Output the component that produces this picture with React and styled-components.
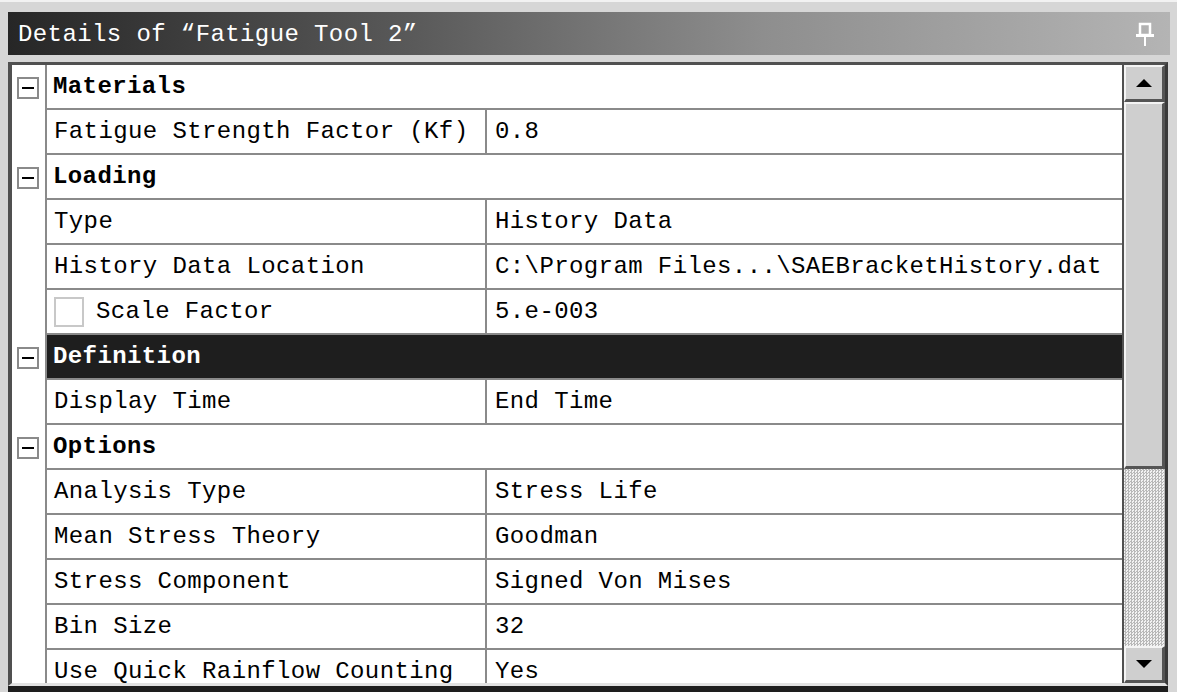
import React from "react";
import styled, { createGlobalStyle } from "styled-components";

const GlobalStyle = createGlobalStyle`
  html, body {
    margin: 0;
    padding: 0;
    background: #d6d6d6;
    overflow: hidden;
  }
`;

const rows = [
  { type: "group", label: "Materials" },
  { label: "Fatigue Strength Factor (Kf)", value: "0.8" },
  { type: "group", label: "Loading" },
  { label: "Type", value: "History Data" },
  { label: "History Data Location", value: "C:\\Program Files...\\SAEBracketHistory.dat" },
  { label: "Scale Factor", value: "5.e-003", check: true },
  { type: "group", label: "Definition", selected: true },
  { label: "Display Time", value: "End Time" },
  { type: "group", label: "Options" },
  { label: "Analysis Type", value: "Stress Life" },
  { label: "Mean Stress Theory", value: "Goodman" },
  { label: "Stress Component", value: "Signed Von Mises" },
  { label: "Bin Size", value: "32" },
  { label: "Use Quick Rainflow Counting", value: "Yes" },
];

export default function App() {
  return (
    <Window>
      <GlobalStyle />
      <TitleBar>
        <Title>Details of “Fatigue Tool 2”</Title>
        <PinIcon />
      </TitleBar>
      <Panel>
        <Table>
          {rows.map((row, i) =>
            row.type === "group" ? (
              <Row key={i}>
                <Gutter>
                  <Toggle />
                </Gutter>
                <GroupCell $selected={row.selected}>{row.label}</GroupCell>
              </Row>
            ) : (
              <Row key={i}>
                <Gutter />
                <LabelCell>
                  {row.check && <CheckBox />}
                  {row.label}
                </LabelCell>
                <ValueCell>{row.value}</ValueCell>
              </Row>
            )
          )}
        </Table>
        <ScrollBar>
          <ScrollButton>
            <Arrow />
          </ScrollButton>
          <Thumb />
          <Track />
          <ScrollButton>
            <Arrow $down />
          </ScrollButton>
        </ScrollBar>
      </Panel>
    </Window>
  );
}

function PinIcon() {
  return (
    <svg width="22" height="26" viewBox="0 0 22 26">
      <path d="M6 2 H16 V13 H6 Z" fill="none" stroke="#fff" strokeWidth="2.5" />
      <rect x="2" y="12" width="18" height="3" fill="#fff" />
      <rect x="10" y="15" width="2" height="9" fill="#fff" />
    </svg>
  );
}

const Window = styled.div`
  width: 1177px;
  height: 692px;
  box-sizing: border-box;
  padding: 10px 9px 0 8px;
  display: flex;
  flex-direction: column;
  gap: 7px;
  font-family: "Liberation Mono", "DejaVu Sans Mono", monospace;
  border-top: 2px solid #f2f2f2;
`;

const TitleBar = styled.div`
  height: 43px;
  flex: none;
  margin-right: -2px;
  display: flex;
  align-items: center;
  justify-content: space-between;
  padding: 2px 14px 0 10px;
  background: linear-gradient(to right, #262626 0%, #5a5a5a 35%, #8e8e8e 65%, #b4b4b4 100%);
  box-sizing: border-box;
`;

const Title = styled.div`
  color: #fff;
  font-size: 24px;
  letter-spacing: 0.4px;
  white-space: pre;
`;

const Panel = styled.div`
  flex: 1;
  min-height: 0;
  display: flex;
  background: #fff;
  border-left: 4px solid #505050;
  border-top: 3px solid #505050;
  border-right: 3px solid #3a3a3a;
  border-bottom: 3px solid #e2e2e2;
  box-shadow: 0 6px 0 #1e1e1e;
  margin-bottom: 6px;
  overflow: hidden;
`;

const Table = styled.div`
  flex: 1;
  display: flex;
  flex-direction: column;
  overflow: hidden;
  border-right: 2px solid #505050;
`;

const Row = styled.div`
  display: grid;
  grid-template-columns: 35px 440px 1fr;
  height: 45px;
  flex: none;
`;

const Gutter = styled.div`
  background: #fff;
  border-right: 2px solid #8a8a8a;
  display: flex;
  align-items: center;
  justify-content: center;
  padding-right: 2px;
`;

const Toggle = styled.div`
  width: 18px;
  height: 18px;
  border: 2px solid #8a8a8a;
  background: #fff;
  position: relative;
  &::after {
    content: "";
    position: absolute;
    left: 3px;
    right: 3px;
    top: 8px;
    height: 2px;
    background: #000;
  }
`;

const Cell = styled.div`
  display: flex;
  align-items: center;
  border-bottom: 2px solid #8a8a8a;
  font-size: 24px;
  letter-spacing: 0.4px;
  white-space: pre;
  overflow: hidden;
  color: #000;
`;

const GroupCell = styled(Cell)`
  grid-column: 2 / 4;
  padding-left: 6px;
  font-weight: bold;
  background: ${(p) => (p.$selected ? "#1e1e1e" : "#fff")};
  color: ${(p) => (p.$selected ? "#fff" : "#000")};
`;

const LabelCell = styled(Cell)`
  padding-left: 7px;
  border-right: 2px solid #8a8a8a;
`;

const ValueCell = styled(Cell)`
  padding-left: 8px;
`;

const CheckBox = styled.span`
  width: 26px;
  height: 26px;
  border: 2px solid #c8c8c8;
  margin-right: 12px;
  flex: none;
`;

const ScrollBar = styled.div`
  width: 41px;
  flex: none;
  display: flex;
  flex-direction: column;
  background-image: repeating-conic-gradient(#b8b8b8 0 25%, #f2f2f2 0 50%);
  background-size: 3px 3px;
`;

const ScrollButton = styled.div`
  height: 37px;
  flex: none;
  background: #cfcfcf;
  border-top: 2px solid #f4f4f4;
  border-left: 2px solid #f4f4f4;
  border-right: 3px solid #555;
  border-bottom: 3px solid #555;
  box-sizing: border-box;
  display: flex;
  align-items: center;
  justify-content: center;
`;

const Arrow = styled.div`
  width: 0;
  height: 0;
  border-left: 8px solid transparent;
  border-right: 8px solid transparent;
  ${(p) =>
    p.$down ? "border-top: 8px solid #000;" : "border-bottom: 8px solid #000;"}
`;

const Thumb = styled.div`
  height: 367px;
  flex: none;
  background: #cfcfcf;
  border-top: 2px solid #f4f4f4;
  border-left: 2px solid #f4f4f4;
  border-right: 3px solid #555;
  border-bottom: 3px solid #555;
  box-sizing: border-box;
`;

const Track = styled.div`
  flex: 1;
`;
